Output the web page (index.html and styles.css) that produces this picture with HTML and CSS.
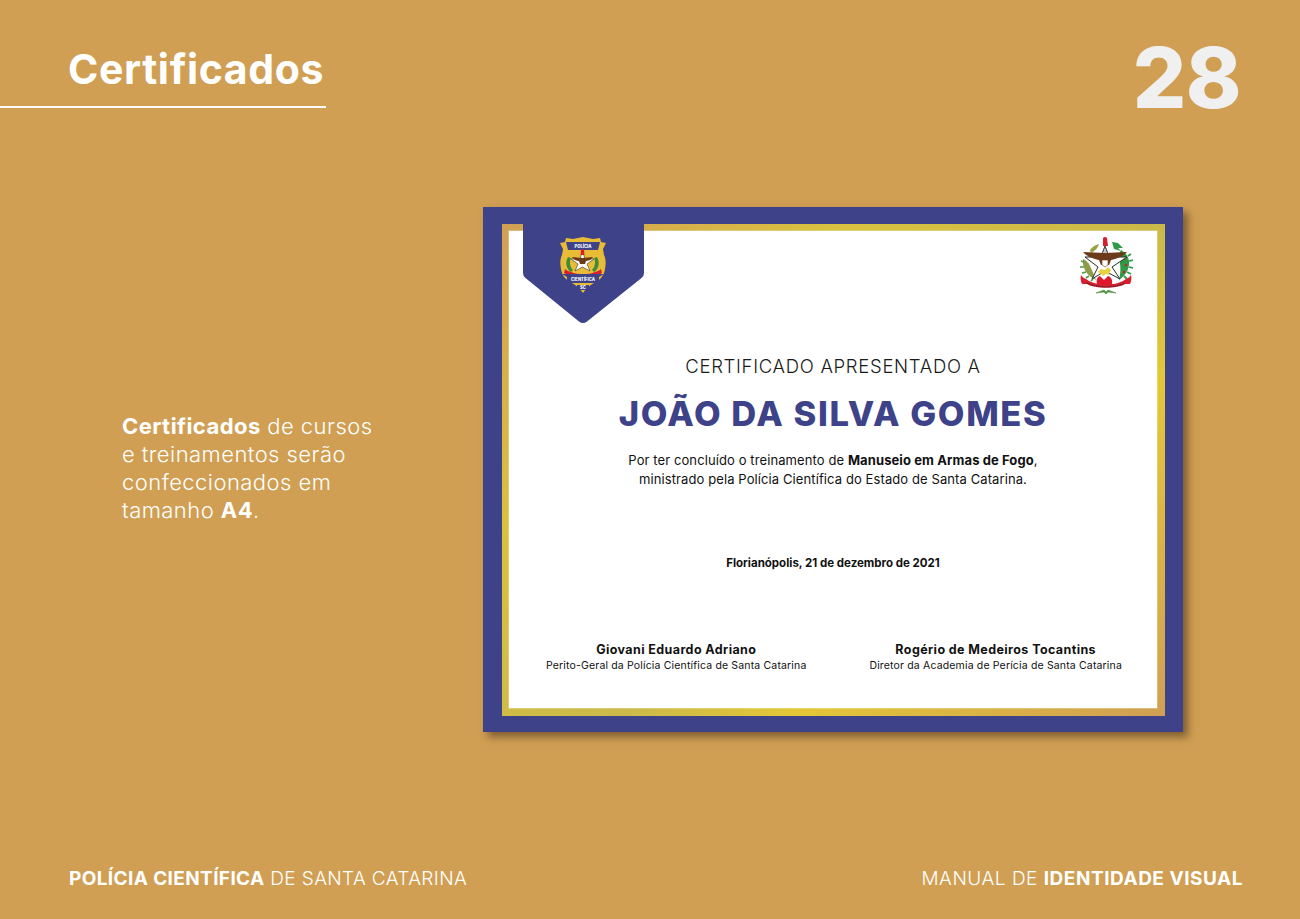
FILE: index.html
```html
<!DOCTYPE html>
<html lang="pt-BR">
<head>
    <meta charset="UTF-8">
    <meta name="viewport" content="width=device-width, initial-scale=1.0">
    <title>Certificados - Manual de Identidade Visual</title>
    <link rel="stylesheet" href="styles.css">
</head>
<body>
    <div class="page">
        <header class="page-header">
            <div class="title-block">
                <h1>Certificados</h1>
            </div>
            <div class="page-number">28</div>
        </header>

        <main class="content">
            <p class="intro"><b>Certificados</b> de cursos<br>e treinamentos serão<br>confeccionados em<br>tamanho <b>A4</b>.</p>

            <div class="certificate">
                <div class="gold-frame">
                    <div class="sheet">
                        <div class="seal-row">
                            <!-- brasao de Santa Catarina -->
                            <svg class="arms" viewBox="0 0 54 58" aria-hidden="true">
                                <path d="M11 13c2-3 5-5 9-6-1 4-4 7-8 9zM9 18l3 2-2 2z" fill="#9aa043"/>
                                <path d="M17 43C8 39 3 31 4 22c3 1 5 3 7 7 2 4 4 9 6 14z" fill="#8d9c45"/>
                                <path d="M5 25l-3-1M5 30l-4 0M7 35l-4 1M10 39l-3 2M14 42l-2 2" stroke="#4f9a48" stroke-width="1.6"/>
                                <path d="M33 5l6 1 5 5-5 0 3 3-7-2zM40 43c6-4 11-11 10-19-1-5-3-8-8-11l-3 6c3 7 3 16 1 24z" fill="#2f9a45"/>
                                <path d="M49 19l3-2M50 24l4-1M50 30l4 1M48 35l4 2M45 39l3 3" stroke="#2f9a45" stroke-width="1.8"/>
                                <circle cx="45" cy="22" r="1.2" fill="#c8202f"/>
                                <circle cx="47" cy="28" r="1.2" fill="#c8202f"/>
                                <circle cx="45" cy="35" r="1.2" fill="#c8202f"/>
                                <path d="M26 9l4 11h18l-15 10 8 12-15-8-13 8 6-12L6 20h16z" fill="#fff" stroke="#2b2b2b" stroke-width="1"/>
                                <path d="M22 20L26 9l4 11M26 13v8" fill="none" stroke="#555" stroke-width=".7"/>
                                <path d="M24 1q2-2 4 0l1 8h-5z" fill="#d6202f"/>
                                <path d="M4 15c7 0 15 1 22 1s15-1 22-1c-4 5-12 7-16 8l-2 5h-8l-2-5c-4-1-12-3-16-8z" fill="#6b3a18"/>
                                <path d="M23 23h6v5l-3 2-3-2z" fill="#fff" stroke="#6b3a18" stroke-width=".6"/>
                                <path d="M19 35l3-3 4 1 3-3 3 3-2 3 1 2-4-1-3 2-2-2z" fill="#e5d23e"/>
                                <path d="M2 38c1 2 3 3 5 4 4 3 8 4 12 5h16c4-1 8-2 12-5 2-1 4-2 5-4 1 3 0 7-1 9l-5 0c-8 5-30 5-38 0l-5 0c-1-2-2-6-1-9z" fill="#d81f30"/>
                                <path d="M18 47c-1-4 0-7 3-8l4 4 4-4c3 1 5 4 4 8-2 1-5 1-8 0-2 1-5 1-7 0z" fill="#e0182d"/>
                                <path class="arms-motto" d="M8 46c9 5 29 5 38 0"/>
                                <path d="M17 56l8-3 2 2 2-2 8 3-8-1-2 2-2-2z" fill="#4d9440" stroke="#4d9440" stroke-width=".6"/>
                            </svg>
                        </div>

                        <h2 class="cert-label">CERTIFICADO APRESENTADO A</h2>
                        <div class="cert-name">JOÃO DA SILVA GOMES</div>
                        <p class="cert-text">Por ter concluído o treinamento de <b>Manuseio em Armas de Fogo</b>,<br>ministrado pela Polícia Científica do Estado de Santa Catarina.</p>
                        <p class="cert-date">Florianópolis, 21 de dezembro de 2021</p>

                        <div class="signatures">
                            <div class="signature">
                                <strong>Giovani Eduardo Adriano</strong>
                                <span>Perito-Geral da Polícia Científica de Santa Catarina</span>
                            </div>
                            <div class="signature">
                                <strong>Rogério de Medeiros Tocantins</strong>
                                <span>Diretor da Academia de Perícia de Santa Catarina</span>
                            </div>
                        </div>
                    </div>
                </div>

                <!-- aba com o distintivo -->
                <svg class="tab" viewBox="0 0 121 100" aria-hidden="true">
                    <path d="M0 0h121v49q0 3-2.500 5L64 97.500q-4 3-8 0L2.500 54Q0 52 0 49z" fill="#3d4289"/>
                    <path d="M37 19l5-1 1-4 7 1 10-2 10 2 7-1 1 4 5 1-3 6 1 6c2 4 2 9 1 14-1 6-4 10-9 13-4 2-9 5-13 11-4-6-9-9-13-11-5-3-8-7-9-13-1-5-1-10 1-14l1-6z" fill="#e8bd35"/>
                    <path d="M43 18h34l-2 8H45z" fill="#3d4289"/>
                    <text class="badge-text" x="60" y="23.500" text-anchor="middle">POLÍCIA</text>
                    <path d="M45 33c-3 5-2 12 3 15l2-2c-3-3-4-8-2-12zM74 33c3 5 2 12-3 15l-2-2c3-3 4-8 2-12z" fill="#3c8a3c"/>
                    <path d="M59.500 27l2.500 8h9l-7 5 3 7-7.500-4-7.500 4 3-7-7-5h9z" fill="#fff" stroke="#333" stroke-width=".6"/>
                    <path d="M58 26q1.500-2 3 0l.5 5h-4z" fill="#d6202f"/>
                    <path d="M49 33c4 0 7 1 10.500 1s6.500-1 10.500-1c-2 3-5 4-7 4l-1 3h-5l-1-3c-2 0-5-1-7-4z" fill="#6b3a18"/>
                    <path d="M42 45c2 2 4 2 6 3 7 3 17 3 24 0 2-1 4-1 6-3l1 4c-2 1-4 2-6 2-8 3-18 3-26 0-2 0-4-1-6-2z" fill="#d81f30"/>
                    <path d="M39 50h42l-5 3v6H44v-6z" fill="#3d4289"/>
                    <text class="badge-text" x="60" y="56.500" text-anchor="middle">CIENTÍFICA</text>
                    <path d="M54 61h12v5H54z" fill="#3d4289"/>
                    <text class="badge-text" x="60" y="65" text-anchor="middle">SC</text>
                </svg>
            </div>
        </main>

        <footer class="page-footer">
            <div><b>POLÍCIA CIENTÍFICA</b> DE SANTA CATARINA</div>
            <div class="footer-right">MANUAL DE <b>IDENTIDADE VISUAL</b></div>
        </footer>
    </div>
</body>
</html>
```

FILE: styles.css
```css
* {
    box-sizing: border-box;
}

body {
    margin: 0;
    background-color: #d09f54;
    color: #fff;
    font-family: Inter, "Liberation Sans", sans-serif;
}

.page {
    display: flex;
    flex-direction: column;
    height: 919px;
    overflow: hidden;
}

.page-header {
    display: flex;
    justify-content: space-between;
    align-items: flex-start;
    height: 207px;
    padding-right: 59px;
}

.title-block {
    width: 326px;
    height: 108px;
    padding: 43px 0 0 68px;
    border-bottom: 2px solid #fff;
}

h1 {
    margin: 0;
    font-size: 41px;
    line-height: 52px;
    font-weight: 700;
    letter-spacing: 0.65px;
    white-space: nowrap;
}

.page-number {
    margin-top: 28px;
    font-size: 84px;
    line-height: 100px;
    font-weight: 800;
    letter-spacing: -0.5px;
    color: #f0f0f0;
}

.content {
    display: flex;
    align-items: flex-start;
    height: 525px;
    padding-left: 122px;
}

.intro {
    width: 361px;
    margin: 205px 0 0;
    font-size: 22px;
    line-height: 28px;
    font-weight: 300;
    letter-spacing: 0.45px;
}

.intro b {
    font-weight: 700;
}

.certificate {
    position: relative;
    width: 700px;
    height: 525px;
    padding: 17px 18px 16px 19px;
    background-color: #3d4289;
    box-shadow: 5px 5px 8px rgba(60, 40, 20, 0.55);
}

.gold-frame {
    height: 100%;
    padding: 6px 7px 7px 6px;
    background: linear-gradient(138deg, #d09f54 0%, #d6ad4c 12%, #d8c23f 28%, #cbb94a 55%, #e3c737 69%, #d09f54 100%);
}

.sheet {
    display: flex;
    flex-direction: column;
    align-items: center;
    height: 100%;
    border: 1px solid rgba(255, 255, 255, 0.25);
    background-color: #fff;
    background-clip: padding-box;
    color: #111;
}

.seal-row {
    display: flex;
    justify-content: flex-end;
    align-self: stretch;
    height: 123px;
    padding: 6px 24px 0 0;
}

.arms {
    width: 54px;
    height: 58px;
}

.arms-motto {
    fill: none;
    stroke: #4a2a2a;
    stroke-width: 1.2;
    stroke-dasharray: 1.2 0.7;
}

.tab {
    position: absolute;
    left: 40px;
    top: 17px;
    width: 121px;
    height: 100px;
}

.badge-text {
    font-size: 4.2px;
    font-weight: 800;
    fill: #fff;
}

.cert-label {
    margin: 0;
    font-size: 18.5px;
    line-height: 24px;
    font-weight: 300;
    letter-spacing: 0.7px;
    color: #1a1a1a;
}

.cert-name {
    margin-top: 14px;
    font-size: 34.5px;
    line-height: 44px;
    font-weight: 800;
    letter-spacing: 1.6px;
    color: #3d4289;
}

.cert-text {
    margin: 15px 0 0;
    font-size: 13px;
    line-height: 19px;
    letter-spacing: 0.1px;
    text-align: center;
}

.cert-text b {
    font-weight: 700;
}

.cert-date {
    margin: 66px 0 0;
    font-size: 11.5px;
    line-height: 16px;
    font-weight: 700;
}

.signatures {
    display: flex;
    justify-content: space-between;
    align-self: stretch;
    margin-top: 71px;
    padding: 0 35px 0 37px;
}

.signature {
    display: flex;
    flex-direction: column;
    align-items: center;
}

.signature strong {
    font-size: 12.5px;
    line-height: 16px;
    font-weight: 700;
    letter-spacing: 0.4px;
}

.signature span {
    font-size: 10.5px;
    line-height: 15px;
    letter-spacing: 0.16px;
}

.page-footer {
    display: flex;
    justify-content: space-between;
    margin-top: 135px;
    padding: 0 57px 0 69px;
    font-size: 19px;
    line-height: 24px;
    font-weight: 300;
    letter-spacing: 0.38px;
}

.page-footer b {
    font-weight: 700;
}

.footer-right {
    letter-spacing: 0.52px;
}
```
